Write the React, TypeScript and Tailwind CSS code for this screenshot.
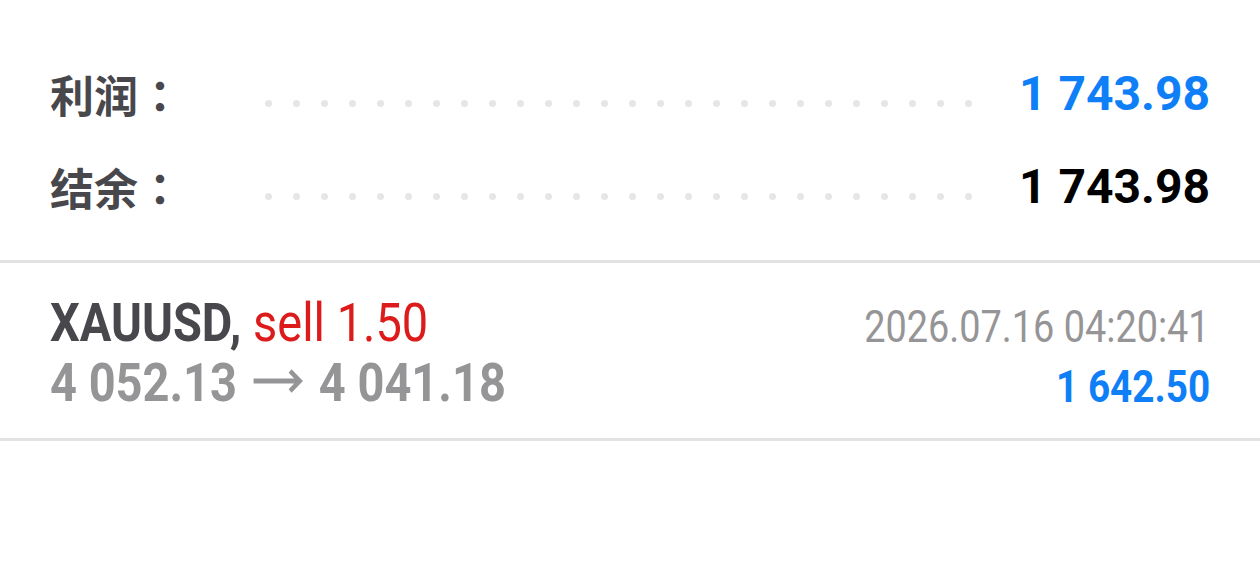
import { Fragment } from 'react'

const DOTS = Array.from({ length: 26 })

function Leader() {
  return (
    <div className="flex items-center gap-[21px] mt-[19px]">
      {DOTS.map((_, i) => (
        <span key={i} className="w-[7px] h-[7px] rounded-full bg-[#e6e6e6]" />
      ))}
    </div>
  )
}

function Arrow() {
  return (
    <svg width="60" height="26" viewBox="0 0 60 26" className="shrink-0 mx-[17px] -translate-y-[2px]">
      <path d="M2 13H55M44 3l11 10-11 10" fill="none" stroke="#959597" strokeWidth="5" />
    </svg>
  )
}

function SummaryRow({ label, value, valueClass }: { label: string; value: string; valueClass: string }) {
  return (
    <div className="h-[93px] flex items-center">
      <div className="w-[215px] text-[44px] font-bold text-[#48484c] font-['Noto_Sans_CJK_SC',sans-serif] leading-none">
        {label}
        <span className="font-['Noto_Sans_CJK_TC',sans-serif]">：</span>
      </div>
      <Leader />
      <div className="flex-1" />
      <div className={`text-[48px] font-bold leading-none font-['Roboto',sans-serif] ${valueClass}`}>{value}</div>
    </div>
  )
}

export default function App() {
  const rows = [
    { label: '利润', value: '1 743.98', valueClass: 'text-[#0f7ff7]' },
    { label: '结余', value: '1 743.98', valueClass: 'text-black' },
  ]

  return (
    <div className="w-[1260px] h-[574px] bg-white overflow-hidden font-['Roboto',sans-serif]">
      {/* Totals */}
      <div className="pt-[47px] pl-[50px] pr-[50px]">
        {rows.map((r) => (
          <Fragment key={r.label}>
            <SummaryRow {...r} />
          </Fragment>
        ))}
      </div>

      {/* Closed position */}
      <div className="mt-[27px] border-t-[3px] border-b-[3px] border-[#e2e2e2] pt-[30px] pb-[21px] px-[50px] flex justify-between">
        <div className="flex flex-col leading-[60px] text-[54px] font-bold">
          <span className="inline-block origin-left scale-x-[0.87] whitespace-nowrap">
            <span className="text-[#48484c]">XAUUSD, </span>
            <span className="text-[#dd1b1b] font-normal">sell 1.50</span>
          </span>
          <span className="inline-flex items-center origin-left scale-x-[0.87] whitespace-nowrap text-[#959597]">
            <span>4 052.13</span>
            <Arrow />
            <span>4 041.18</span>
          </span>
        </div>
        <div className="flex flex-col items-end pt-[4px] leading-[60px] text-[44px]">
          <span className="inline-block origin-right scale-x-[0.86] whitespace-nowrap text-[#959597]">
            2026.07.16 04:20:41
          </span>
          <span className="inline-block origin-right scale-x-[0.86] whitespace-nowrap font-bold text-[#0f7ff7] text-[45px]">
            1 642.50
          </span>
        </div>
      </div>
    </div>
  )
}
